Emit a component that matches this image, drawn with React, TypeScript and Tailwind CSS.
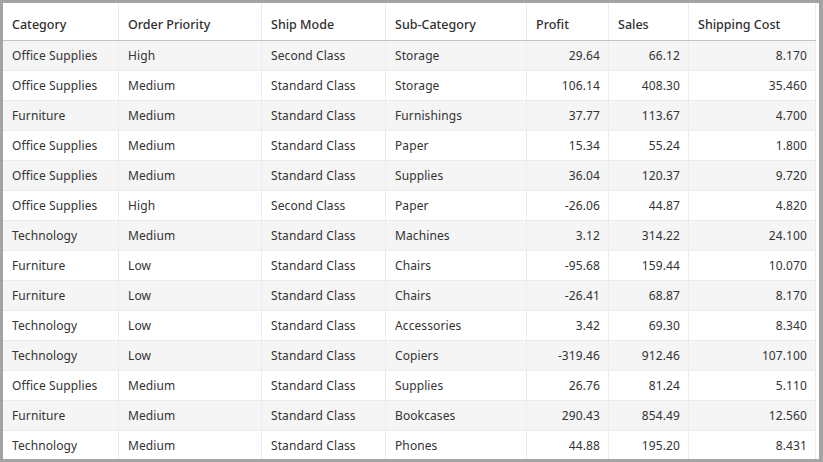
import React from "react";

const cols = [
  { name: "Category", w: "w-[116px]", right: false },
  { name: "Order Priority", w: "w-[143px]", right: false },
  { name: "Ship Mode", w: "w-[124px]", right: false },
  { name: "Sub-Category", w: "w-[141px]", right: false },
  { name: "Profit", w: "w-[82px]", right: true },
  { name: "Sales", w: "w-[80px]", right: true },
  { name: "Shipping Cost", w: "w-[127px]", right: true },
];

const rows: string[][] = [
  ["Office Supplies", "High", "Second Class", "Storage", "29.64", "66.12", "8.170"],
  ["Office Supplies", "Medium", "Standard Class", "Storage", "106.14", "408.30", "35.460"],
  ["Furniture", "Medium", "Standard Class", "Furnishings", "37.77", "113.67", "4.700"],
  ["Office Supplies", "Medium", "Standard Class", "Paper", "15.34", "55.24", "1.800"],
  ["Office Supplies", "Medium", "Standard Class", "Supplies", "36.04", "120.37", "9.720"],
  ["Office Supplies", "High", "Second Class", "Paper", "-26.06", "44.87", "4.820"],
  ["Technology", "Medium", "Standard Class", "Machines", "3.12", "314.22", "24.100"],
  ["Furniture", "Low", "Standard Class", "Chairs", "-95.68", "159.44", "10.070"],
  ["Furniture", "Low", "Standard Class", "Chairs", "-26.41", "68.87", "8.170"],
  ["Technology", "Low", "Standard Class", "Accessories", "3.42", "69.30", "8.340"],
  ["Technology", "Low", "Standard Class", "Copiers", "-319.46", "912.46", "107.100"],
  ["Office Supplies", "Medium", "Standard Class", "Supplies", "26.76", "81.24", "5.110"],
  ["Furniture", "Medium", "Standard Class", "Bookcases", "290.43", "854.49", "12.560"],
  ["Technology", "Medium", "Standard Class", "Phones", "44.88", "195.20", "8.431"],
];

export default function App() {
  return (
    <div
      className="w-[823px] h-[462px] overflow-hidden bg-[#a3a3a3] pt-[3px] pl-[3px] pr-[4px] pb-[3px]"
      style={{ fontFamily: '"Noto Sans", "Open Sans", sans-serif' }}
    >
      <div className="w-[816px] h-[456px] overflow-hidden bg-white pr-[3px]">
        <div className="flex h-[38px] border-b border-[#c4c4c4] bg-white">
          {cols.map((c, i) => (
            <div
              key={i}
              className={`${c.w} shrink-0 flex items-center pt-[8px] pl-[9px] border-r border-[#ececec] text-[12.5px] font-medium text-[#2f2f2f]`}
            >
              {c.name}
            </div>
          ))}
        </div>
        {rows.map((r, ri) => (
          <div
            key={ri}
            className={`flex h-[30px] border-b border-[#ebebeb] ${ri % 2 === 0 ? "bg-[#f5f5f5]" : "bg-white"}`}
          >
            {r.map((v, ci) => (
              <div
                key={ci}
                className={`${cols[ci].w} shrink-0 flex items-center border-r border-[#ececec] text-[12px] tracking-[0.1px] text-[#333333] ${cols[ci].right ? "justify-end pr-[8px]" : "pl-[9px]"}`}
              >
                {v}
              </div>
            ))}
          </div>
        ))}
      </div>
    </div>
  );
}
